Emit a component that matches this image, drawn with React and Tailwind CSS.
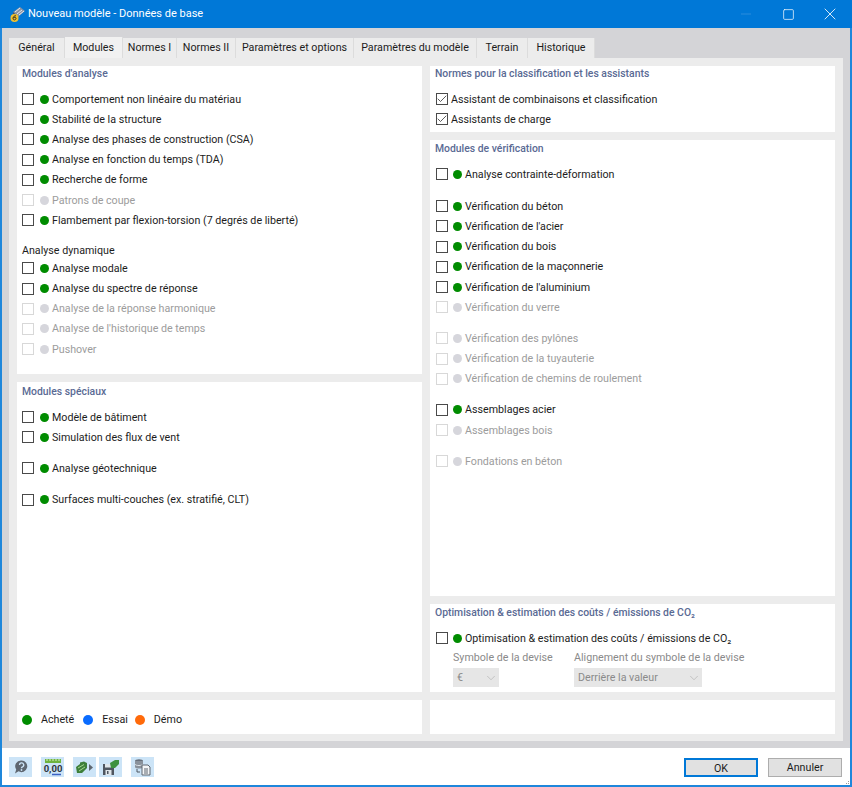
import { Check, ChevronDown, Minus, Square, X } from 'lucide-react'

const tabs = [
  ['Général', 'w-[56px]'],
  ['Modules', 'w-[58px]'],
  ['Normes I', 'w-[54px]'],
  ['Normes II', 'w-[59px]'],
  ['Paramètres et options', 'w-[118px]'],
  ['Paramètres du modèle', 'w-[123px]'],
  ['Terrain', 'w-[51px]'],
  ['Historique', 'w-[67px]'],
]

function Row({ label, checked, disabled, dot = true, gap }) {
  return (
    <div className={`flex h-[20.2px] items-center ${gap ? 'mt-[11px]' : ''}`}>
      <span
        className={`box flex h-[12px] w-[12px] shrink-0 items-center justify-center border ${
          disabled ? 'border-[#d8d8d8]' : 'border-[#4a4a4a]'
        } bg-white`}
      >
        {checked && <Check className="h-[12px] w-[12px] shrink-0 text-[#333]" strokeWidth={1.6} />}
      </span>
      {dot && (
        <span className={`dot ml-[6px] h-[9px] w-[9px] shrink-0 rounded-full ${disabled ? 'bg-[#d6d6dc]' : 'bg-[#008c00]'}`} />
      )}
      <span className={`ml-[3px] whitespace-nowrap pt-[1px] ${disabled ? 'text-[#9c9c9c]' : 'text-[#1c1c1c]'}`}>
        {label}
      </span>
    </div>
  )
}

function Title({ children }) {
  return <div className="h-[16px] whitespace-nowrap text-[10.4px] font-medium leading-[15px] text-[#5a6a94]">{children}</div>
}

function Panel({ className = '', children }) {
  return <div className={`bg-white pl-[5px] ${className}`}>{children}</div>
}

function Legend({ color, label, className }) {
  return (
    <div className={`flex items-center ${className}`}>
      <span className={`h-[10px] w-[10px] rounded-full ${color}`} />
      <span className="ml-[9px] pt-[1px] text-[#1c1c1c]">{label}</span>
    </div>
  )
}

function IconButton({ children, className = '' }) {
  return <div className={`flex h-[20px] w-[23px] items-center justify-center bg-[#cce4f7] ${className}`}>{children}</div>
}

function Select({ value, className }) {
  return (
    <div className={`flex h-[19px] items-center justify-between bg-[#e6e6e6] pl-[4px] pr-[1px] text-[#8a8a8a] ${className}`}>
      <span>{value}</span>
      <ChevronDown className="h-[14px] w-[14px] text-[#a8a8a8]" strokeWidth={1} />
    </div>
  )
}

function AppIcon() {
  return (
    <svg width="18" height="18" viewBox="0 0 18 18">
      <path d="M4 7 L11 2 L16 6 L9 12 Z" fill="#8a93a3" />
      <path d="M6 7 L11 3 M8 9 L13 5 M10 10 L15 6" stroke="#e6e8ee" strokeWidth="1" />
      <path d="M4 7 L9 12 L9 14 L4 10 Z" fill="#4e5563" />
      <circle cx="5.5" cy="13" r="4" fill="#f2c230" />
      <path d="M7 10.8 C5 10.6 4 12 4 13.5 C4 15.4 7 15.4 7 13.4 C7 12 5 12 4.2 13" fill="none" stroke="#3a3320" strokeWidth="1" />
    </svg>
  )
}

export default function App() {
  return (
    <div className="flex h-[787px] w-[852px] flex-col overflow-hidden bg-white font-['Roboto',sans-serif] text-[10.7px]">
      {/* Title bar */}
      <div className="flex h-[28px] shrink-0 items-center bg-[#0078d7] pl-[9px] text-white">
        <AppIcon />
        <span className="ml-[1px] text-[11px]">Nouveau modèle - Données de base</span>
        <div className="ml-auto flex items-center pr-[1px]">
          <div className="flex w-[42px] justify-center"><Minus className="h-[16px] w-[16px] text-[#3f97df]" strokeWidth={1} /></div>
          <div className="flex w-[42px] justify-center"><Square className="h-[13px] w-[13px]" strokeWidth={1.3} /></div>
          <div className="flex w-[42px] justify-center"><X className="h-[20px] w-[20px]" strokeWidth={1} /></div>
        </div>
      </div>

      <div className="flex min-h-0 flex-1 flex-col border-x-2 border-b-2 border-[#1f87db]">
        {/* Tabbed area */}
        <div className="flex h-[720px] flex-col bg-[#d4d4d7] px-[7px] pb-[7px] pt-[9px]">
          <div className="flex h-[21px] items-end">
            {tabs.map(([label, width]) => (
              <div
                key={label}
                className={`flex ${width} items-center justify-center border-r border-[#dcdcdc] pt-[1px] text-[#1c1c1c] ${
                  label === 'Modules' ? 'h-[21px] bg-[#f1f1f1]' : 'h-[20px] bg-[#ececec]'
                }`}
              >
                {label}
              </div>
            ))}
          </div>

          <div className="grid flex-1 grid-cols-2 gap-x-[8px] bg-[#ececec] px-[8px] pb-[7px] pt-[8px]">
            <div className="flex flex-col gap-[8px]">
              <Panel className="h-[308px]">
                <Title>Modules d'analyse</Title>
                <div className="mt-[7px]">
                  <Row label="Comportement non linéaire du matériau" />
                  <Row label="Stabilité de la structure" />
                  <Row label="Analyse des phases de construction (CSA)" />
                  <Row label="Analyse en fonction du temps (TDA)" />
                  <Row label="Recherche de forme" />
                  <Row label="Patrons de coupe" disabled />
                  <Row label="Flambement par flexion-torsion (7 degrés de liberté)" />
                </div>
                <div className="mt-[11px] h-[17px] leading-[19px] text-[#1c1c1c]">Analyse dynamique</div>
                <Row label="Analyse modale" />
                <Row label="Analyse du spectre de réponse" />
                <Row label="Analyse de la réponse harmonique" disabled />
                <Row label="Analyse de l'historique de temps" disabled />
                <Row label="Pushover" disabled />
              </Panel>
              <Panel className="h-[310px] pt-[2px]">
                <Title>Modules spéciaux</Title>
                <div className="mt-[7px]">
                  <Row label="Modèle de bâtiment" />
                  <Row label="Simulation des flux de vent" />
                  <Row label="Analyse géotechnique" gap />
                  <Row label="Surfaces multi-couches (ex. stratifié, CLT)" gap />
                </div>
              </Panel>
              <Panel className="flex h-[34px] items-center pt-[6px]">
                <Legend color="bg-[#008c00]" label="Acheté" />
                <Legend color="bg-[#0a6cff]" label="Essai" className="ml-[9px]" />
                <Legend color="bg-[#ff6a0a]" label="Démo" className="ml-[7px]" />
              </Panel>
            </div>

            <div className="flex flex-col gap-[8px] [&_.box]:ml-[1px] [&_.dot]:ml-[5px]">
              <Panel className="h-[66px]">
                <Title>Normes pour la classification et les assistants</Title>
                <div className="mt-[7px]">
                  <Row label="Assistant de combinaisons et classification" checked dot={false} />
                  <Row label="Assistants de charge" checked dot={false} />
                </div>
              </Panel>
              <Panel className="h-[456px] pt-[1px]">
                <Title>Modules de vérification</Title>
                <div className="mt-[7px]">
                  <Row label="Analyse contrainte-déformation" />
                  <div className="mt-[12px]">
                    <Row label="Vérification du béton" />
                  </div>
                  <Row label="Vérification de l'acier" />
                  <Row label="Vérification du bois" />
                  <Row label="Vérification de la maçonnerie" />
                  <Row label="Vérification de l'aluminium" />
                  <Row label="Vérification du verre" disabled />
                  <Row label="Vérification des pylônes" disabled gap />
                  <Row label="Vérification de la tuyauterie" disabled />
                  <Row label="Vérification de chemins de roulement" disabled />
                  <Row label="Assemblages acier" gap />
                  <Row label="Assemblages bois" disabled />
                  <Row label="Fondations en béton" disabled gap />
                </div>
              </Panel>
              <Panel className="h-[88px] pt-[1px]">
                <Title>Optimisation &amp; estimation des coûts / émissions de CO₂</Title>
                <div className="mt-[7px]">
                  <Row label="Optimisation & estimation des coûts / émissions de CO₂" />
                </div>
                <div className="ml-[18px] flex gap-[23px] text-[#8a8a8a]">
                  <div className="w-[98px]">
                    <div className="h-[20px] whitespace-nowrap leading-[20px]">Symbole de la devise</div>
                    <Select value="€" className="w-[46px]" />
                  </div>
                  <div>
                    <div className="h-[20px] whitespace-nowrap leading-[20px]">Alignement du symbole de la devise</div>
                    <Select value="Derrière la valeur" className="w-[128px]" />
                  </div>
                </div>
              </Panel>
              <Panel className="h-[34px]" />
            </div>
          </div>
        </div>

        {/* Footer */}
        <div className="relative flex flex-1 items-center pl-[7px] pr-[8px] pt-[1px]">
          <IconButton>
            <svg width="16" height="16" viewBox="0 0 16 16">
              <path d="M8.5 1.5 a5.8 5.8 0 1 1 -3 10.8 L2 14.5 L3.2 10.5 A5.8 5.8 0 0 1 8.5 1.5 Z" fill="#5e6670" />
              <path d="M6.5 6 a2.1 2.1 0 1 1 3 1.9 c-.7 .3 -1 .7 -1 1.3" fill="none" stroke="#cce4f7" strokeWidth="1.4" />
              <circle cx="8.5" cy="11" r=".9" fill="#cce4f7" />
            </svg>
          </IconButton>
          <IconButton className="ml-[9px]">
            <svg width="20" height="18" viewBox="0 0 20 18">
              <rect x="2" y="1" width="16" height="4" fill="#6db33f" />
              <path d="M4 1v2M7 1v2M10 1v2M13 1v2M16 1v2" stroke="#d8efc8" strokeWidth="1" />
              <path d="M9 16.5h9" stroke="#3b62c4" strokeWidth="1.5" />
              <text x="10" y="14" textAnchor="middle" fontSize="9.5" fontWeight="700" fill="#2f3640" fontFamily="Roboto, sans-serif">0,00</text>
            </svg>
          </IconButton>
          <IconButton className="ml-[9px]">
            <svg width="19" height="15" viewBox="0 0 19 15">
              <path d="M1 7 L5 4 L5 2.5 L9 1.5 L12 3 L12 8 L7 13 L2 13 Z" fill="#3d7f3a" />
              <path d="M3 8 L9 4.5 M4 11 L10 7" stroke="#a6d892" strokeWidth="1" />
              <path d="M14 4 L18 7.5 L14 11 Z" fill="#5e6670" />
            </svg>
          </IconButton>
          <IconButton className="ml-[3px]">
            <svg width="19" height="17" viewBox="0 0 19 17">
              <path d="M2 5 H13 V16 H2 Z" fill="#4f5660" />
              <rect x="4" y="5" width="6" height="3.5" fill="#dfe5ea" />
              <rect x="4.5" y="11" width="6" height="5" fill="#dfe5ea" />
              <rect x="6" y="12" width="1.5" height="3" fill="#4f5660" />
              <path d="M9 4 L14 1 H18 V5 L14 9 H10 Z" fill="#3d9140" />
            </svg>
          </IconButton>
          <IconButton className="ml-[9px]">
            <svg width="19" height="18" viewBox="0 0 19 18">
              <ellipse cx="6" cy="3" rx="4" ry="1.8" fill="#69717c" />
              <path d="M2 3 V9 C2 11 10 11 10 9 V3" fill="#8a929c" />
              <path d="M2 6 C2 8 10 8 10 6" fill="none" stroke="#dfe5ea" strokeWidth="1" />
              <path d="M4 11 V14 H7" fill="none" stroke="#4f5660" strokeWidth="1" />
              <path d="M9 7 H15 L17 9 V17 H9 Z" fill="#f4f6f8" stroke="#5e6670" strokeWidth="1" />
              <path d="M11 11 H15 M11 13 H15 M11 15 H15" stroke="#5e6670" strokeWidth="1" />
            </svg>
          </IconButton>
          <button className="ml-auto h-[19px] w-[74px] border-2 border-[#0078d7] bg-[#e1e1e1] pt-[1px] text-[#1c1c1c]">OK</button>
          <button className="ml-[10px] h-[19px] w-[74px] border border-[#adadad] bg-[#e1e1e1] pt-[1px] text-[#1c1c1c]">Annuler</button>
          <div className="absolute bottom-0 right-0 grid grid-cols-3 gap-[1px] p-[1px]">
            <span /><span /><span className="h-[1px] w-[1px] bg-[#999]" />
            <span /><span className="h-[1px] w-[1px] bg-[#999]" /><span className="h-[1px] w-[1px] bg-[#999]" />
          </div>
        </div>
      </div>
    </div>
  )
}
